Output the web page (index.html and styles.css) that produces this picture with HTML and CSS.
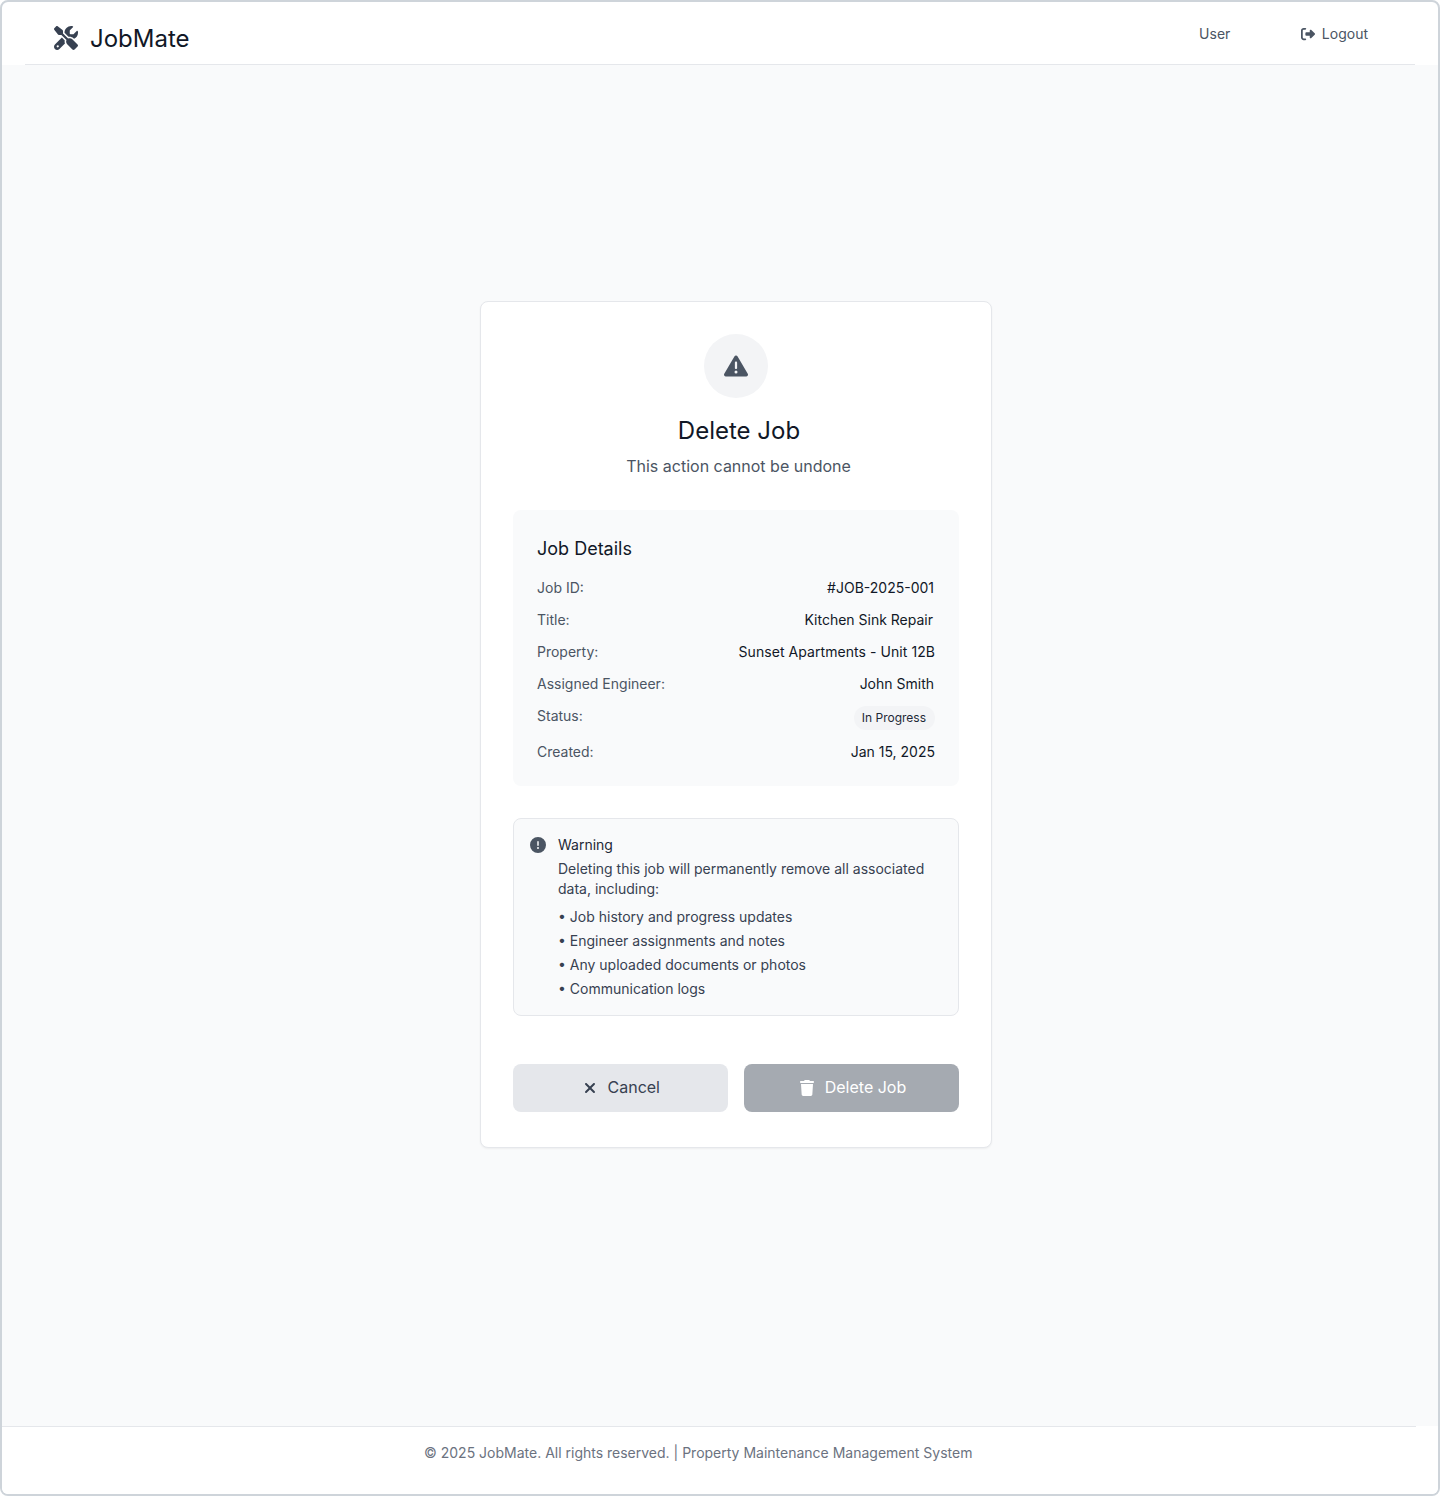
FILE: index.html
```html
<!DOCTYPE html>
<html lang="en">
<head>
<meta charset="utf-8">
<title>JobMate - Delete Job</title>
<link rel="stylesheet" href="styles.css">
</head>
<body>
<div class="app">
  <header class="header">
    <div class="brand">
      <svg class="brand-icon" viewBox="0 0 512 512" aria-hidden="true"><path d="M78.6 5C69.1-2.4 55.6-1.5 47 7L7 47c-8.5 8.5-9.4 22-2.1 31.6l80 104c4.5 5.9 11.6 9.4 19 9.4h54.1l109 109c-14.7 29-10 65.4 14.3 89.6l112 112c12.5 12.5 32.8 12.5 45.3 0l64-64c12.5-12.5 12.5-32.8 0-45.3l-112-112c-24.2-24.2-60.6-29-89.6-14.3l-109-109V104c0-7.5-3.5-14.5-9.4-19L78.6 5zM19.9 396.1C7.2 408.8 0 426.1 0 444.1C0 481.6 30.4 512 67.9 512c18 0 35.3-7.2 48-19.9L233.7 374.3c-7.8-20.9-9-43.6-3.6-65.1l-61.7-61.7L19.9 396.1zM512 144c0-10.5-1.1-20.7-3.2-30.5c-2.4-11.2-16.1-14.1-24.2-6l-63.9 63.9c-3 3-7.1 4.7-11.3 4.7H352c-8.8 0-16-7.2-16-16V102.6c0-4.2 1.7-8.3 4.7-11.3l63.9-63.9c8.1-8.1 5.2-21.8-6-24.2C388.7 1.1 378.5 0 368 0C288.5 0 224 64.5 224 144l0 .8 85.3 85.3c36-9.1 75.8 .5 104 28.7L429 274.5c49-23 83-72.8 83-130.5zM56 432a24 24 0 1 1 48 0 24 24 0 1 1 -48 0z"/></svg>
      <span class="brand-name">JobMate</span>
    </div>
    <nav class="nav">
      <span class="nav-user">User</span>
      <a class="nav-logout">
        <svg class="logout-icon" viewBox="0 0 512 512" aria-hidden="true"><path d="M377.9 105.9L500.7 228.7c7.2 7.2 11.3 17.1 11.3 27.3s-4.1 20.1-11.3 27.3L377.9 406.1c-6.4 6.4-15 9.9-24 9.9c-18.7 0-33.9-15.2-33.9-33.9l0-62.1-128 0c-17.7 0-32-14.3-32-32l0-64c0-17.7 14.3-32 32-32l128 0 0-62.1c0-18.7 15.2-33.9 33.9-33.9c9 0 17.6 3.6 24 9.9zM160 96L96 96c-17.7 0-32 14.3-32 32l0 256c0 17.7 14.3 32 32 32l64 0c17.7 0 32 14.3 32 32s-14.3 32-32 32l-64 0c-53 0-96-43-96-96L0 128C0 75 43 32 96 32l64 0c17.7 0 32 14.3 32 32s-14.3 32-32 32z"/></svg>
        <span>Logout</span>
      </a>
    </nav>
  </header>

  <main class="main">
    <section class="card">
      <div class="card-head">
        <div class="alert-badge">
          <svg class="alert-icon" viewBox="0 0 512 512" aria-hidden="true"><path d="M256 32c14.2 0 27.3 7.5 34.5 19.8l216 368c7.3 12.4 7.3 27.7 .2 40.1S486.3 480 472 480H40c-14.3 0-27.6-7.7-34.7-20.1s-7-27.8 .2-40.1l216-368C228.7 39.5 241.8 32 256 32zm0 128c-13.3 0-24 10.7-24 24V296c0 13.3 10.7 24 24 24s24-10.7 24-24V184c0-13.3-10.7-24-24-24zm32 224a32 32 0 1 0 -64 0 32 32 0 1 0 64 0z"/></svg>
        </div>
        <h1 class="title">Delete Job</h1>
        <p class="subtitle">This action cannot be undone</p>
      </div>

      <div class="details">
        <h2 class="details-title">Job Details</h2>
        <dl class="rows">
          <div class="row"><dt>Job ID:</dt><dd class="inset-1">#JOB-2025-001</dd></div>
          <div class="row"><dt>Title:</dt><dd class="inset-2">Kitchen Sink Repair</dd></div>
          <div class="row"><dt>Property:</dt><dd class="property">Sunset Apartments - Unit 12B</dd></div>
          <div class="row"><dt>Assigned Engineer:</dt><dd class="inset-1">John Smith</dd></div>
          <div class="row"><dt>Status:</dt><dd class="status">In Progress</dd></div>
          <div class="row"><dt>Created:</dt><dd>Jan 15, 2025</dd></div>
        </dl>
      </div>

      <div class="warning">
        <svg class="warning-icon" viewBox="0 0 512 512" aria-hidden="true"><path d="M256 512A256 256 0 1 0 256 0a256 256 0 1 0 0 512zm0-384c13.3 0 24 10.7 24 24V264c0 13.3-10.7 24-24 24s-24-10.7-24-24V152c0-13.3 10.7-24 24-24zM224 352a32 32 0 1 1 64 0 32 32 0 1 1 -64 0z"/></svg>
        <div class="warning-body">
          <h3 class="warning-title">Warning</h3>
          <p class="warning-text">Deleting this job will permanently remove all associated<br>data, including:</p>
          <ul class="warning-list">
            <li>• Job history and progress updates</li>
            <li>• Engineer assignments and notes</li>
            <li>• Any uploaded documents or photos</li>
            <li>• Communication logs</li>
          </ul>
        </div>
      </div>

      <div class="actions">
        <button class="btn btn-cancel" type="button">
          <svg class="cancel-icon" viewBox="0 0 384 512" aria-hidden="true"><path d="M342.6 150.6c12.5-12.5 12.5-32.8 0-45.3s-32.8-12.5-45.3 0L192 210.7 86.6 105.4c-12.5-12.5-32.8-12.5-45.3 0s-12.5 32.8 0 45.3L146.7 256 41.4 361.4c-12.5 12.5-12.5 32.8 0 45.3s32.8 12.5 45.3 0L192 301.3 297.4 406.6c12.5 12.5 32.8 12.5 45.3 0s12.5-32.8 0-45.3L237.3 256 342.6 150.6z"/></svg>
          <span class="btn-label">Cancel</span>
        </button>
        <button class="btn btn-delete" type="button">
          <svg class="trash-icon" viewBox="0 0 448 512" aria-hidden="true"><path d="M135.2 17.7L128 32H32C14.3 32 0 46.3 0 64S14.3 96 32 96H416c17.7 0 32-14.3 32-32s-14.3-32-32-32H320l-7.2-14.3C307.4 6.8 296.3 0 284.2 0H163.8c-12.1 0-23.2 6.8-28.6 17.7zM416 128H32L53.2 467c1.6 25.3 22.6 45 47.9 45H346.9c25.3 0 46.3-19.7 47.9-45L416 128z"/></svg>
          <span class="btn-label">Delete Job</span>
        </button>
      </div>
    </section>
  </main>

  <footer class="footer">
    <div class="footer-line">© 2025 JobMate. All rights reserved. | Property Maintenance Management System</div>
  </footer>
</div>
</body>
</html>
```
FILE: styles.css
```css
* {
  box-sizing: border-box;
  margin: 0;
  padding: 0;
}

body {
  background: #fff;
  font-family: Inter, "Liberation Sans", sans-serif;
  font-size: 14px;
  line-height: 20px;
  color: #111827;
}

h1, h2, h3 {
  font-weight: 400;
}

svg {
  display: block;
  flex: none;
  fill: currentColor;
}

.app {
  display: flex;
  flex-direction: column;
  height: 1496px;
  border: 2px solid #ced4da;
  border-radius: 8px;
  overflow: hidden;
  background: #fff;
}

.header {
  display: flex;
  justify-content: space-between;
  height: 63px;
  margin: 0 23px;
  padding: 0 47px 0 29px;
  border-bottom: 1px solid #e5e7eb;
}

.brand {
  display: flex;
  align-items: flex-start;
  gap: 12px;
  padding-top: 21px;
}

.brand-icon {
  width: 24px;
  height: 24px;
  margin-top: 3px;
  color: #374151;
}

.brand-name {
  font-size: 24px;
  line-height: 32px;
}

.nav {
  display: flex;
  align-items: flex-start;
  gap: 70.5px;
  padding-top: 22px;
  color: #4b5563;
}

.nav-logout {
  display: flex;
  align-items: center;
  gap: 7px;
}

.logout-icon {
  width: 14px;
  height: 14px;
}

.main {
  flex: 1;
  padding: 236px 0 0 478px;
  background: #f9fafb;
}

.card {
  width: 512px;
  height: 847px;
  padding: 32px;
  border: 1px solid #e5e7eb;
  border-radius: 8px;
  background: #fff;
  box-shadow: 0 1px 2px rgba(0, 0, 0, 0.05);
}

.card-head {
  display: flex;
  flex-direction: column;
  align-items: center;
}

.alert-badge {
  display: flex;
  align-items: center;
  justify-content: center;
  width: 64px;
  height: 64px;
  border-radius: 50%;
  background: #f3f4f6;
  color: #4b5563;
}

.alert-icon {
  width: 24px;
  height: 24px;
}

.title {
  margin-top: 17px;
  padding-left: 6px;
  font-size: 24px;
  line-height: 32px;
}

.subtitle {
  margin-top: 7px;
  padding-left: 5px;
  font-size: 16px;
  line-height: 24px;
  color: #4b5563;
}

.details {
  margin-top: 32px;
  padding: 25px 24px 24px;
  border-radius: 8px;
  background: #f9fafb;
}

.details-title {
  font-size: 18px;
  line-height: 28px;
}

.rows {
  display: flex;
  flex-direction: column;
  gap: 12px;
  margin-top: 15px;
}

.row {
  display: flex;
  justify-content: space-between;
  align-items: flex-start;
}

.row dt {
  color: #4b5563;
}

.inset-1 {
  padding-right: 1px;
}

.inset-2 {
  padding-right: 2px;
}

.property {
  letter-spacing: 0.06px;
}

.status {
  padding: 4px 9px 4px 8px;
  border-radius: 12px;
  background: #f3f4f6;
  font-size: 12px;
  line-height: 16px;
  color: #1f2937;
}

.warning {
  display: flex;
  gap: 12px;
  margin-top: 32px;
  padding: 16px;
  border: 1px solid #e5e7eb;
  border-radius: 8px;
  background: #f9fafb;
}

.warning-icon {
  width: 16px;
  height: 16px;
  margin-top: 2px;
  color: #4b5563;
}

.warning-title {
  font-size: 14px;
  color: #1f2937;
}

.warning-text {
  margin-top: 4px;
  color: #374151;
}

.warning-list {
  display: flex;
  flex-direction: column;
  gap: 4px;
  margin-top: 8px;
  list-style: none;
  color: #374151;
}

.actions {
  display: grid;
  grid-template-columns: 1fr 1fr;
  gap: 16px;
  margin-top: 48px;
}

.btn {
  display: flex;
  align-items: center;
  justify-content: center;
  height: 48px;
  padding-left: 3px;
  border: 0;
  border-radius: 8px;
  font: inherit;
  font-size: 16px;
  line-height: 24px;
}

.btn-label {
  padding-bottom: 2px;
}

.btn-cancel {
  gap: 11.5px;
  background: #e5e7eb;
  color: #374151;
}

.btn-delete {
  gap: 11px;
  background: #a5aab1;
  color: #fff;
}

.cancel-icon {
  width: 12px;
  height: 16px;
}

.trash-icon {
  width: 14px;
  height: 16px;
}

.footer {
  height: 68px;
  background: #fff;
}

.footer-line {
  width: 1414px;
  padding: 16px 0 0 422px;
  border-top: 1px solid #e5e7eb;
  color: #6b7280;
}
```
